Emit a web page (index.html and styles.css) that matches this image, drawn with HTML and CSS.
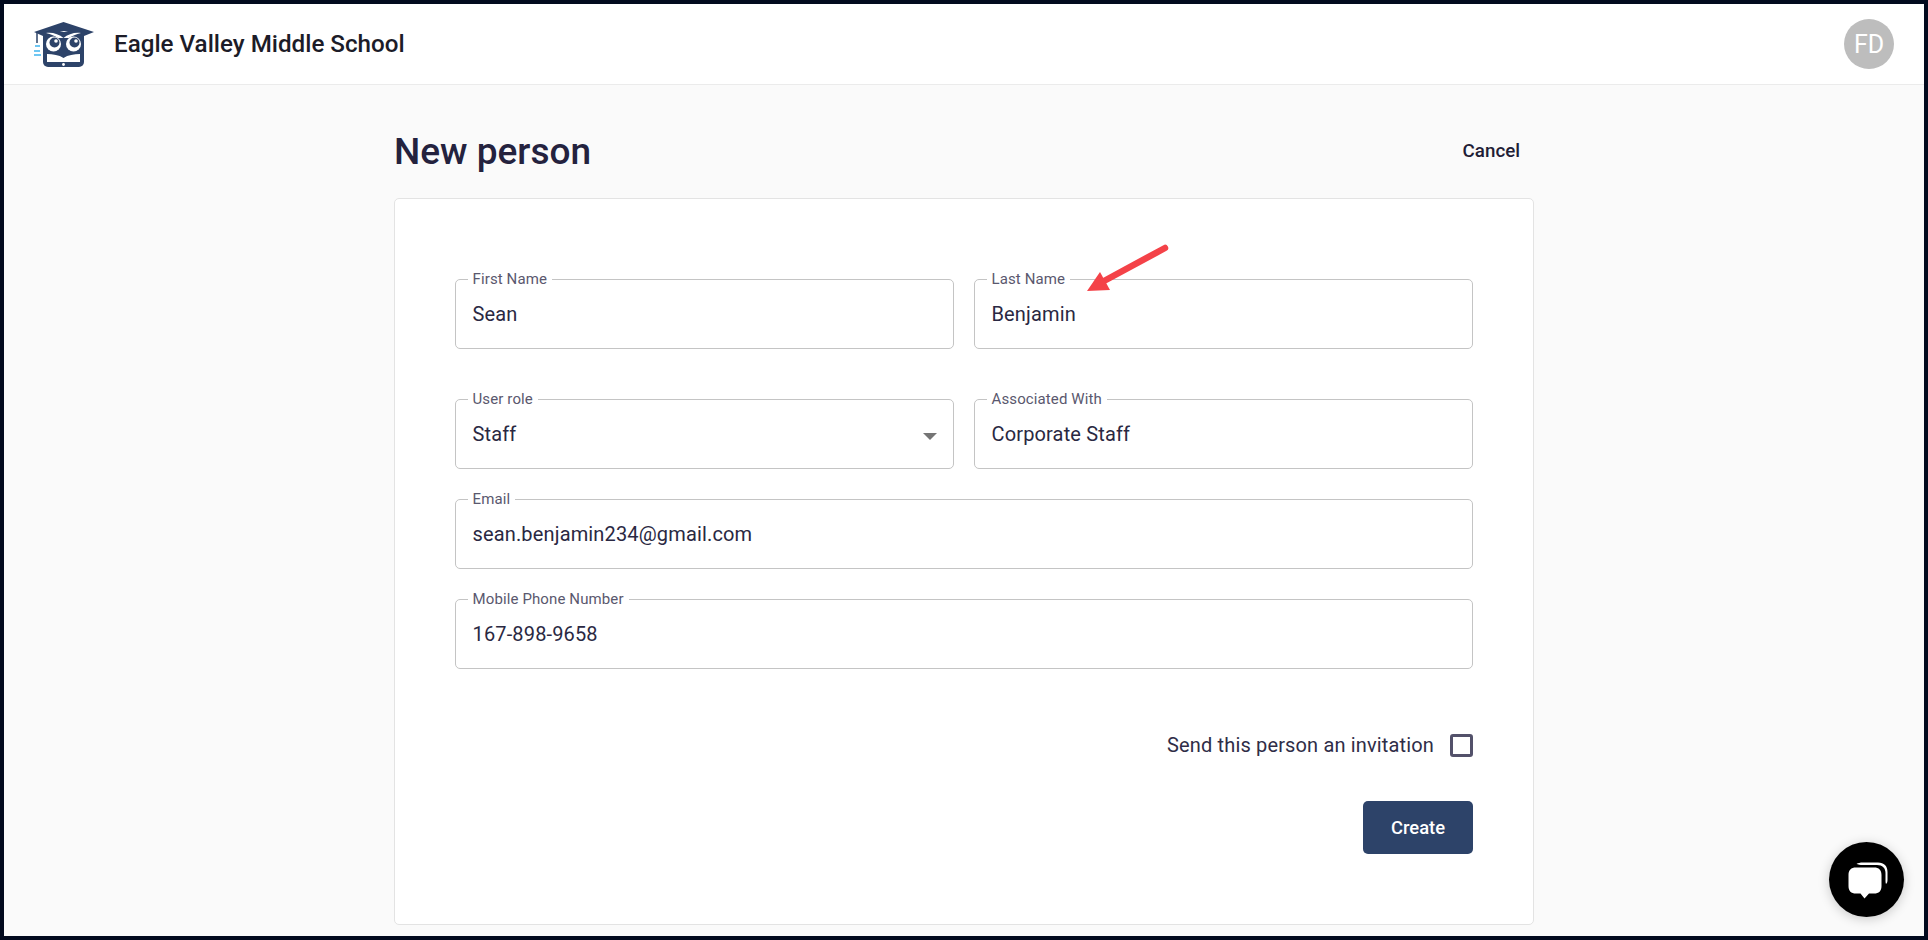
FILE: index.html
```html
<!DOCTYPE html>
<html lang="en">
<head>
<meta charset="utf-8">
<title>New person</title>
<link rel="stylesheet" href="styles.css">
</head>
<body>
<div class="frame">
  <header class="topbar">
    <div class="brand">
      <svg class="logo" viewBox="0 -1 90 70" width="90" height="70" aria-hidden="true">
        <path d="M23 22H64V52a5 5 0 0 1-5 5H28a5 5 0 0 1-5-5Z" fill="#2d4369"/>
        <path d="M43.500 12 74 22 64 26 44 21 23 26 14 22Z" fill="#2d4369"/>
        <path d="M26 23C32 22 39 24 43.500 28 48 24 55 22 61 23 56 24 52 26 49 28H38C35 26 31 24 26 23Z" fill="#fff"/>
        <circle cx="33.500" cy="34" r="7.500" fill="#fff"/><circle cx="53.500" cy="34" r="7.500" fill="#fff"/>
        <circle cx="34.500" cy="32.500" r="5" fill="#2d4369"/><circle cx="54.500" cy="32.500" r="5" fill="#2d4369"/>
        <circle cx="36" cy="31" r="1.800" fill="#fff"/><circle cx="56" cy="31" r="1.800" fill="#fff"/>
        <path d="M27 44C33 44 39 45 43.500 48 48 45 54 44 60 44V52H27Z" fill="#fff"/>
        <circle cx="43.500" cy="54.500" r="1.400" fill="#fff"/>
        <path d="M17 22V33" stroke="#2d4369" stroke-width="1.500"/>
        <path d="M15 36H20M14 41H20M14 45H21" stroke="#3fb4ee" stroke-width="1.500"/>
      </svg>
      <span class="school">Eagle Valley Middle School</span>
    </div>
    <div class="avatar">FD</div>
  </header>

  <main class="main">
    <div class="heading">
      <h1 class="title">New person</h1>
      <span class="cancel">Cancel</span>
    </div>
    <section class="card">
      <div class="grid row-first">
        <div class="field"><span class="label">First Name</span><span class="value">Sean</span></div>
        <div class="field"><span class="label">Last Name</span><span class="value">Benjamin</span>
          <svg class="arrow" viewBox="0 0 90 50" width="90" height="50" aria-hidden="true">
            <path d="M83 4 22 37" stroke="#f44248" stroke-width="6.500" stroke-linecap="round"/>
            <path d="M5 47 18 28 28 46Z" fill="#f44248"/>
          </svg>
        </div>
      </div>
      <div class="grid row">
        <div class="field"><span class="label">User role</span><span class="value">Staff</span><span class="caret"></span></div>
        <div class="field"><span class="label">Associated With</span><span class="value">Corporate Staff</span></div>
      </div>
      <div class="field row"><span class="label">Email</span><span class="value">sean.benjamin234@gmail.com</span></div>
      <div class="field row"><span class="label">Mobile Phone Number</span><span class="value">167-898-9658</span></div>
      <div class="invite">
        <span class="invite-text">Send this person an invitation</span>
        <span class="checkbox"></span>
      </div>
      <div class="actions"><span class="button">Create</span></div>
    </section>
  </main>

  <div class="chat">
    <svg viewBox="0 0 44 44" width="44" height="44" aria-hidden="true">
      <path d="M11.500 6C13 5 15 4.500 18 4.500H33C39 4.500 42.500 8 42.500 14V22C42.500 24 42 25 41 26 40.500 25 40.500 23 40.500 21V15C40.500 10 37.500 7 32 7H18C15 7 13 6.500 11.500 6Z" fill="#fff"/>
      <path d="M11 9.500H29C34 9.500 36.500 12 36.500 17V28C36.500 33 34 35.500 29 35.500H24L19.500 40.500 15.500 35.500H11C6 35.500 3.500 33 3.500 28V17C3.500 12 6 9.500 11 9.500Z" fill="#fff"/>
    </svg>
  </div>
</div>
</body>
</html>
```
FILE: styles.css
```css
* { box-sizing: border-box; }
html, body { margin: 0; padding: 0; }
body { font-family: Roboto, "Liberation Sans", sans-serif; color: #24223e; overflow: hidden; }

.frame {
  position: relative;
  height: 940px;
  border: 4px solid #020a1e;
  background: #fafafa;
  overflow: hidden;
}

.topbar {
  height: 81px;
  background: #fff;
  border-bottom: 1px solid #ebebeb;
  display: flex;
  align-items: center;
  justify-content: space-between;
  padding: 0 30px 0 16px;
}
.brand { display: flex; align-items: center; }
.logo { display: block; margin-right: 4px; }
.school { font-size: 24.200px; font-weight: 500; color: #1c1c28; }
.avatar {
  width: 50px;
  height: 50px;
  border-radius: 50%;
  background: #bdbdbd;
  color: #fff;
  font-size: 25px;
  display: flex;
  align-items: center;
  justify-content: center;
}

.main { width: 1140px; margin: 0 auto; padding-top: 41px; }
.heading { height: 50px; display: flex; align-items: center; justify-content: space-between; margin-bottom: 22px; }
.title { margin: 0; font-size: 37px; font-weight: 500; color: #24223e; }
.cancel { font-size: 18.750px; font-weight: 500; margin-right: 14px; color: #1f1d36; }

.card {
  height: 727px;
  background: #fff;
  border: 1px solid #e3e3e3;
  border-radius: 5px;
  padding: 80px 60px 0;
}
.grid { display: grid; grid-template-columns: 1fr 1fr; column-gap: 20px; }
.row-first { margin-bottom: 50px; }
.row { margin-bottom: 30px; }

.field {
  position: relative;
  height: 70px;
  border: 1px solid #c4c4c4;
  border-radius: 5px;
  display: flex;
  align-items: center;
  padding: 0 16.500px;
}
.label {
  position: absolute;
  top: -9px;
  left: 11.500px;
  padding: 0 5px;
  background: #fff;
  font-size: 15px;
  line-height: 17px;
  letter-spacing: 0.120px;
  color: #5a586e;
}
.value { font-size: 20px; letter-spacing: 0.150px; color: #2a2842; }
.caret {
  position: absolute;
  right: 16px;
  top: 33px;
  width: 0;
  height: 0;
  border-left: 7.500px solid transparent;
  border-right: 7.500px solid transparent;
  border-top: 7.500px solid #757575;
}
.arrow { position: absolute; left: 107px; top: -36px; }

.invite { display: flex; justify-content: flex-end; align-items: center; margin-top: 61px; height: 30px; }
.invite-text { font-size: 20px; letter-spacing: 0.150px; color: #2f2d47; margin-right: 16px; }
.checkbox {
  width: 23px;
  height: 23px;
  border: 3px solid #53516a;
  border-radius: 3px;
}
.actions { display: flex; justify-content: flex-end; margin-top: 41px; }
.button {
  width: 110px;
  height: 53px;
  border-radius: 5px;
  background: #2d4369;
  color: #fff;
  font-size: 18.400px;
  font-weight: 500;
  display: flex;
  align-items: center;
  justify-content: center;
}

.chat {
  position: absolute;
  left: 1825px;
  top: 838px;
  width: 75px;
  height: 75px;
  border-radius: 50%;
  background: #000;
  box-shadow: 0 2px 12px rgba(0, 0, 0, 0.2);
  display: flex;
  align-items: center;
  justify-content: center;
}
```
